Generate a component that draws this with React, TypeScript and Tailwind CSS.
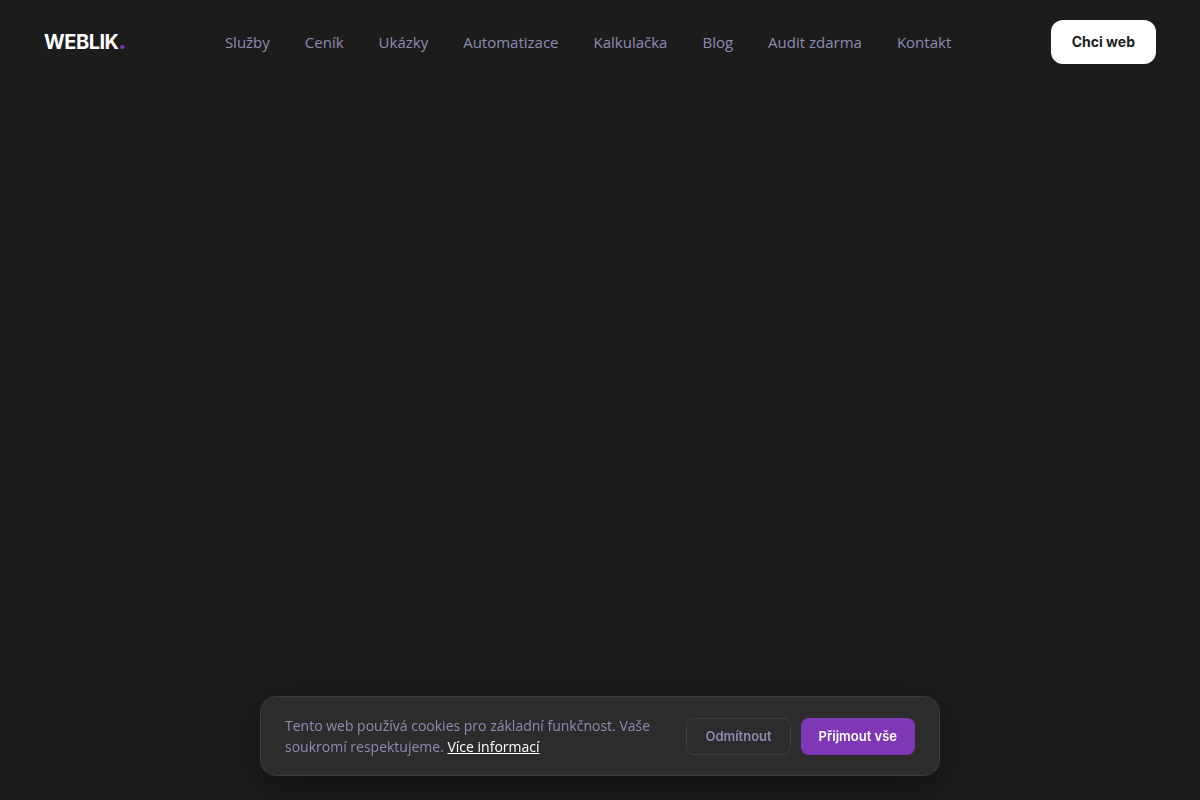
import React from 'react';

const links = [
  { label: 'Služby', href: '#sluzby' },
  { label: 'Ceník', href: '#cenik' },
  { label: 'Ukázky', href: '#ukazky' },
  { label: 'Automatizace', href: '#automatizace' },
  { label: 'Kalkulačka', href: '#kalkulacka' },
  { label: 'Blog', href: '#blog' },
  { label: 'Audit zdarma', href: '#audit' },
  { label: 'Kontakt', href: '#kontakt' },
];

const Header = () => (
  <header className="flex items-center justify-between px-11 py-5">
    <a href="#" className="text-xl leading-7 font-bold tracking-tight text-white">
      WEBLIK<span className="font-black text-[#7e37b5]">.</span>
    </a>
    <nav className="flex items-center gap-[35px]">
      {links.map(link => (
        <a key={link.href} href={link.href} className="font-['Open_Sans',sans-serif] text-[15px] leading-5 whitespace-nowrap text-[#8f8bb0] hover:text-white">
          {link.label}
        </a>
      ))}
    </nav>
    <button type="button" className="h-11 rounded-xl bg-white px-[21px] text-sm font-bold whitespace-nowrap text-[#1c1c1c]">
      Chci web
    </button>
  </header>
);

const CookieBar = () => (
  <div className="fixed inset-x-0 bottom-6 flex justify-center px-6">
    <section
      aria-label="Cookies"
      className="flex w-full max-w-[680px] items-center gap-6 rounded-2xl border border-[#3d3d3d] bg-[#2c2c2c] px-6 py-[18px] shadow-[0_8px_40px_rgba(0,0,0,0.4)]"
    >
      <p className="flex-1 font-['Open_Sans',sans-serif] text-sm leading-[21px] text-[#8f8bb0]">
        Tento web používá cookies pro základní funkčnost. Vaše soukromí respektujeme.{' '}
        <a href="#cookies" className="text-white underline">Více informací</a>
      </p>
      <div className="flex shrink-0 gap-[10px]">
        <button type="button" className="rounded-lg border border-[#3d3d3d] px-[18px] py-2 text-[13px] leading-[19px] font-semibold text-[#8f8bb0]">
          Odmítnout
        </button>
        <button type="button" className="rounded-lg bg-[#7e37b5] px-[18px] py-[9px] text-[13px] leading-[19px] font-semibold text-white">
          Přijmout vše
        </button>
      </div>
    </section>
  </div>
);

export default function App() {
  return (
    <div className="min-h-screen bg-[#1c1c1c] font-['Inter',sans-serif]">
      <Header />
      <CookieBar />
    </div>
  );
}
